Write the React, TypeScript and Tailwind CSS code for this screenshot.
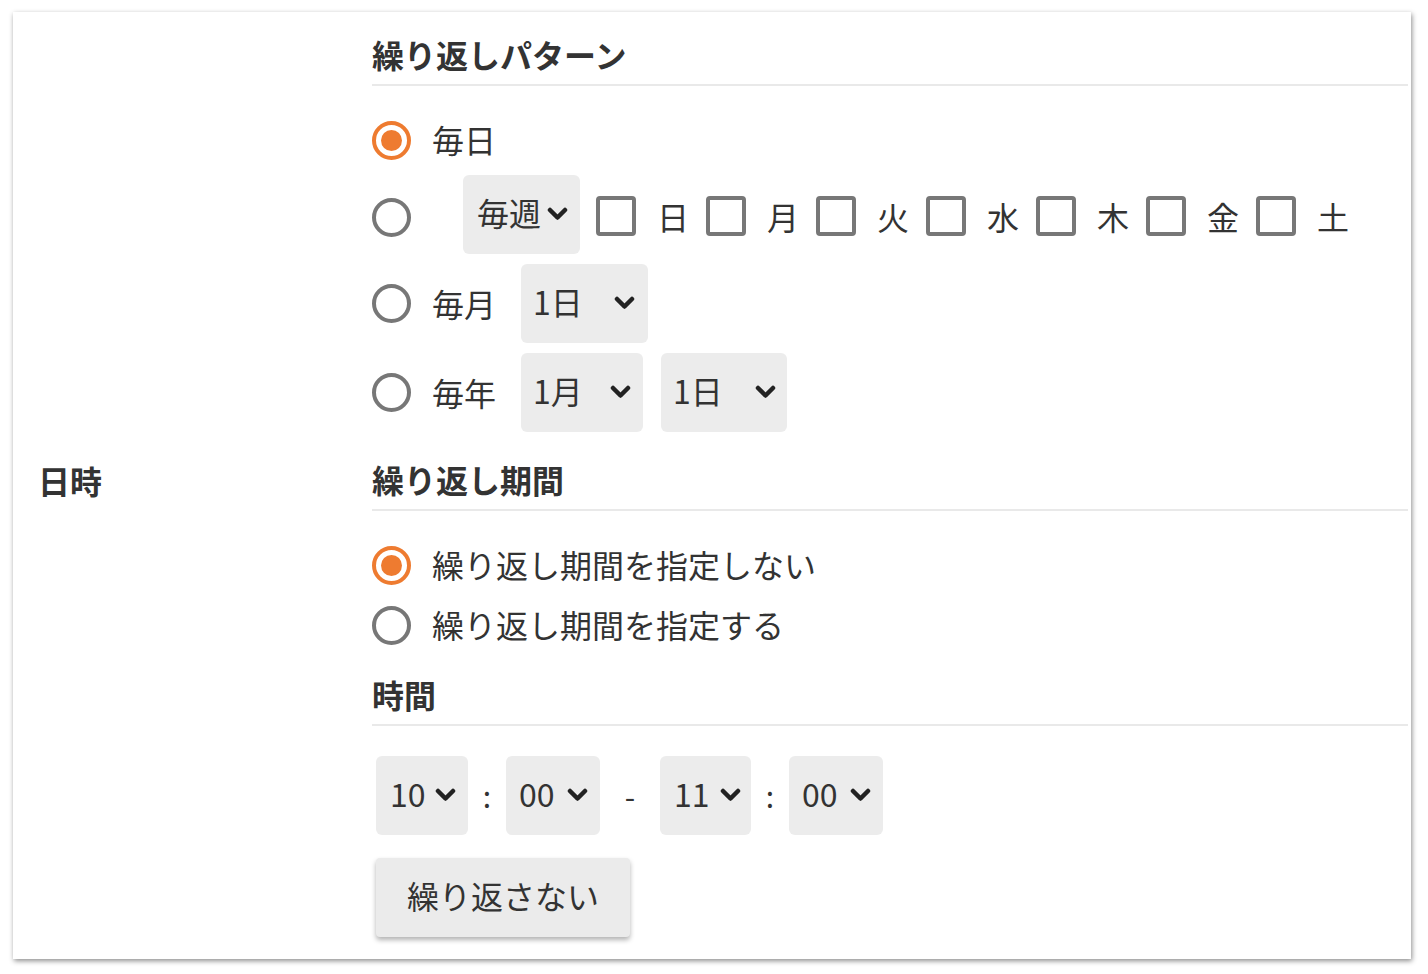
import React from "react";

const FONT = { fontFamily: '"Noto Sans CJK JP", "Noto Sans", sans-serif' };

function Chevron() {
  return (
    <svg width="21" height="14" viewBox="0 0 21 14" className="shrink-0">
      <path d="M3 3 L10.5 10.5 L18 3" fill="none" stroke="#222" strokeWidth="4.5" strokeLinecap="round" strokeLinejoin="round" />
    </svg>
  );
}

function Radio({ checked }: { checked?: boolean }) {
  return checked ? (
    <div className="w-[39px] h-[39px] rounded-full border-[4px] border-[#ee7b30] flex items-center justify-center shrink-0">
      <div className="w-[21px] h-[21px] rounded-full bg-[#ee7b30]" />
    </div>
  ) : (
    <div className="w-[39px] h-[39px] rounded-full border-[4px] border-[#777] shrink-0" />
  );
}

function Select({ label, w, pl, pr }: { label: string; w: string; pl: string; pr: string }) {
  return (
    <div className={`h-[79px] rounded-[6px] bg-[#ececec] flex items-center justify-between ${w} ${pl} ${pr} shrink-0`}>
      <span className="text-[32px] leading-none text-[#333] -mt-[4px]">{label}</span>
      <Chevron />
    </div>
  );
}

function Heading({ children }: { children: React.ReactNode }) {
  return (
    <div className="text-[32px] leading-[44px] font-bold text-[#333] pb-[8px] border-b-2 border-[#e9e9e9]">
      {children}
    </div>
  );
}

const days = ["日", "月", "火", "水", "木", "金", "土"];

export default function App() {
  return (
    <div className="w-[1428px] h-[974px] bg-white pt-[12px] pl-[13px]" style={FONT}>
      <div className="w-[1398px] h-[947px] bg-white shadow-[1px_2px_5px_rgba(0,0,0,0.45)] flex items-center pl-[25px] pr-[3px]">
        <div className="w-[334px] shrink-0 text-[32px] font-bold text-[#333] leading-none pb-[12px]">日時</div>
        <div className="flex-1 flex flex-col -mt-[3px]">
          <Heading>繰り返しパターン</Heading>
          <div className="mt-[31px] flex flex-col gap-[10px]">
            <div className="h-[48px] flex items-center">
              <Radio checked />
              <span className="ml-[21px] text-[32px] text-[#333] -mt-[3px]">毎日</span>
            </div>
            <div className="h-[79px] flex items-center">
              <div className="mt-[6px]"><Radio /></div>
              <div className="ml-[52px]">
                <Select label="毎週" w="w-[117px]" pl="pl-[14px]" pr="pr-[12px]" />
              </div>
              <div className="flex items-center ml-[16px] gap-[17px] mt-[3px]">
                {days.map((d) => (
                  <div key={d} className="flex items-center">
                    <div className="w-[40px] h-[40px] border-[4px] border-[#777] rounded-[4px]" />
                    <span className="ml-[21px] w-[32px] text-[32px] text-[#333] leading-none">{d}</span>
                  </div>
                ))}
              </div>
            </div>
            <div className="h-[79px] flex items-center">
              <Radio />
              <span className="ml-[21px] text-[32px] text-[#333]">毎月</span>
              <div className="ml-[25px]">
                <Select label="1日" w="w-[127px]" pl="pl-[12px]" pr="pr-[13px]" />
              </div>
            </div>
            <div className="h-[79px] flex items-center">
              <Radio />
              <span className="ml-[21px] text-[32px] text-[#333]">毎年</span>
              <div className="ml-[25px] flex gap-[18px]">
                <Select label="1月" w="w-[122px]" pl="pl-[12px]" pr="pr-[12px]" />
                <Select label="1日" w="w-[126px]" pl="pl-[12px]" pr="pr-[11px]" />
              </div>
            </div>
          </div>

          <div className="mt-[25px]">
            <Heading>繰り返し期間</Heading>
          </div>
          <div className="mt-[31px] flex flex-col gap-[12px]">
            <div className="h-[48px] flex items-center">
              <Radio checked />
              <span className="ml-[21px] text-[32px] text-[#333] -mt-[3px]">繰り返し期間を指定しない</span>
            </div>
            <div className="h-[48px] flex items-center">
              <Radio />
              <span className="ml-[21px] text-[32px] text-[#333] -mt-[3px]">繰り返し期間を指定する</span>
            </div>
          </div>

          <div className="mt-[22px]">
            <Heading>時間</Heading>
          </div>
          <div className="mt-[30px] ml-[4px] flex items-center">
            <Select label="10" w="w-[92px]" pl="pl-[14px]" pr="pr-[12px]" />
            <span className="w-[38px] text-center text-[30px] text-[#333]">:</span>
            <Select label="00" w="w-[94px]" pl="pl-[13px]" pr="pr-[12px]" />
            <span className="w-[60px] text-center text-[30px] text-[#333]">-</span>
            <Select label="11" w="w-[91px]" pl="pl-[14px]" pr="pr-[10px]" />
            <span className="w-[38px] text-center text-[30px] text-[#333]">:</span>
            <Select label="00" w="w-[94px]" pl="pl-[13px]" pr="pr-[12px]" />
          </div>
          <div className="mt-[23px] ml-[4px]">
            <button className="w-[254px] h-[79px] rounded-[4px] bg-[#ebebeb] shadow-[0_3px_5px_rgba(0,0,0,0.3)] text-[32px] text-[#333] text-left pl-[31px] pb-[4px]">
              繰り返さない
            </button>
          </div>
        </div>
      </div>
    </div>
  );
}
